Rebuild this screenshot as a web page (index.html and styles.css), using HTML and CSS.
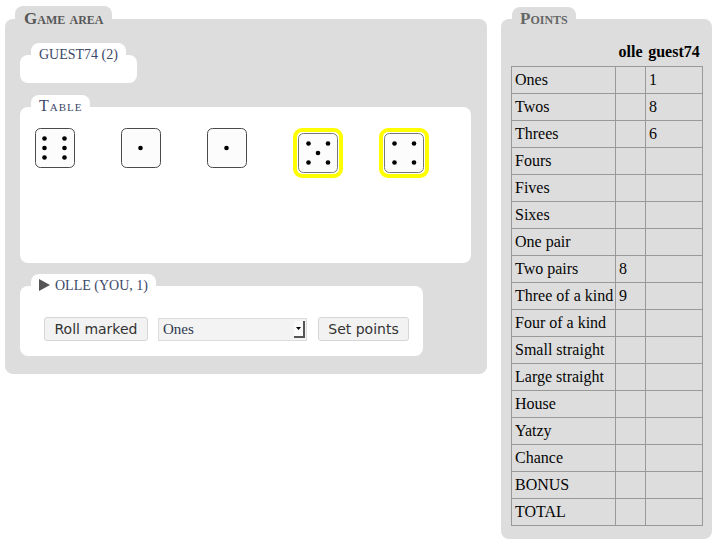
FILE: index.html
```html
<!DOCTYPE html>
<html lang="en">
<head>
<meta charset="utf-8">
<title>Yatzy</title>
<link rel="stylesheet" href="styles.css">
</head>
<body>
<div class="page">
  <section class="fs game">
    <div class="tab tab-main">Game area</div>
    <div class="panel game-body">
      <div class="fs">
        <div class="tab tab-sub">GUEST74 (2)</div>
        <div class="card guest-card"></div>
      </div>
      <div class="fs">
        <div class="tab tab-sub tab-table">Table</div>
        <div class="card table-card">
          <div class="die-slot">
            <svg class="die" viewBox="0 0 40 40" width="40" height="40"><rect x="0.5" y="0.5" width="39" height="39" rx="5" fill="#fcfcfc" stroke="#4a4a4a"/><circle cx="9.5" cy="10.5" r="2.3"/><circle cx="29.5" cy="10.5" r="2.3"/><circle cx="9.5" cy="20" r="2.3"/><circle cx="29.5" cy="20" r="2.3"/><circle cx="9.5" cy="29.5" r="2.3"/><circle cx="29.5" cy="29.5" r="2.3"/></svg>
          </div>
          <div class="die-slot">
            <svg class="die" viewBox="0 0 40 40" width="40" height="40"><rect x="0.5" y="0.5" width="39" height="39" rx="5" fill="#fcfcfc" stroke="#4a4a4a"/><circle cx="19.5" cy="20" r="2.3"/></svg>
          </div>
          <div class="die-slot">
            <svg class="die" viewBox="0 0 40 40" width="40" height="40"><rect x="0.5" y="0.5" width="39" height="39" rx="5" fill="#fcfcfc" stroke="#4a4a4a"/><circle cx="19.5" cy="20" r="2.3"/></svg>
          </div>
          <div class="die-slot">
            <div class="die-sel"><svg class="die" viewBox="0 0 40 40" width="40" height="40"><rect x="0.5" y="0.5" width="39" height="39" rx="5" fill="#fcfcfc" stroke="#777"/><circle cx="10.5" cy="10.5" r="2.3"/><circle cx="30" cy="10.5" r="2.3"/><circle cx="20" cy="20" r="2.3"/><circle cx="10.5" cy="29.5" r="2.3"/><circle cx="30" cy="29.5" r="2.3"/></svg></div>
          </div>
          <div class="die-slot">
            <div class="die-sel"><svg class="die" viewBox="0 0 40 40" width="40" height="40"><rect x="0.5" y="0.5" width="39" height="39" rx="5" fill="#fcfcfc" stroke="#777"/><circle cx="10.5" cy="10.5" r="2.3"/><circle cx="30" cy="10.5" r="2.3"/><circle cx="10.5" cy="29.5" r="2.3"/><circle cx="30" cy="29.5" r="2.3"/></svg></div>
          </div>
        </div>
      </div>
      <div class="fs player">
        <div class="tab tab-sub"><svg class="turn" viewBox="0 0 11 12" width="11" height="12"><polygon points="0,0 11,6 0,12" fill="#555"/></svg>OLLE (YOU, 1)</div>
        <div class="card player-card">
          <button class="btn roll" type="button">Roll marked</button>
          <div class="select"><span class="select-value">Ones</span><span class="select-arrow"><svg viewBox="0 0 5 3" width="5" height="3"><polygon points="0,0 5,0 2.5,3" fill="#000"/></svg></span></div>
          <button class="btn set" type="button">Set points</button>
        </div>
      </div>
    </div>
  </section>
  <section class="fs points">
    <div class="tab tab-main">Points</div>
    <div class="panel points-body">
      <table class="score">
        <colgroup><col class="c-name"><col class="c-p1"><col class="c-p2"></colgroup>
        <thead><tr><th></th><th>olle</th><th>guest74</th></tr></thead>
        <tbody>
          <tr><td>Ones</td><td></td><td>1</td></tr>
          <tr><td>Twos</td><td></td><td>8</td></tr>
          <tr><td>Threes</td><td></td><td>6</td></tr>
          <tr><td>Fours</td><td></td><td></td></tr>
          <tr><td>Fives</td><td></td><td></td></tr>
          <tr><td>Sixes</td><td></td><td></td></tr>
          <tr><td>One pair</td><td></td><td></td></tr>
          <tr><td>Two pairs</td><td>8</td><td></td></tr>
          <tr><td>Three of a kind</td><td>9</td><td></td></tr>
          <tr><td>Four of a kind</td><td></td><td></td></tr>
          <tr><td>Small straight</td><td></td><td></td></tr>
          <tr><td>Large straight</td><td></td><td></td></tr>
          <tr><td>House</td><td></td><td></td></tr>
          <tr><td>Yatzy</td><td></td><td></td></tr>
          <tr><td>Chance</td><td></td><td></td></tr>
          <tr><td>BONUS</td><td></td><td></td></tr>
          <tr><td>TOTAL</td><td></td><td></td></tr>
        </tbody>
      </table>
    </div>
  </section>
</div>
</body>
</html>
```
FILE: styles.css
```css
html, body {
  margin: 0;
  padding: 0;
  background: #fff;
}
body {
  font-family: "Liberation Serif", "Times New Roman", serif;
  color: #000;
}
.page {
  display: flex;
  align-items: flex-start;
  gap: 14px;
  padding: 6px 0 0 5px;
}
.fs {
  display: flex;
  flex-direction: column;
  align-items: flex-start;
}
.tab {
  position: relative;
  z-index: 1;
  margin-left: 10px;
  padding: 0 8px;
  height: 12px;
  border-radius: 8px 8px 0 0;
  white-space: nowrap;
}
.tab-main {
  background: #dddddd;
  height: 13px;
  padding: 0 9px;
  font-size: 17px;
  line-height: 25px;
  font-weight: bold;
  font-variant: small-caps;
  color: #585858;
}
.panel {
  background: #dddddd;
  border-radius: 8px;
  box-sizing: border-box;
}
.game-body {
  width: 482px;
  padding: 24px 16px 18px 15px;
  display: flex;
  flex-direction: column;
  gap: 12px;
}
.player {
  margin-top: -1px;
}
.tab-sub {
  background: #fff;
  margin-left: 11px;
  font-size: 14px;
  line-height: 24px;
  color: #3c4868;
}
.tab-table {
  font-size: 16px;
  font-variant: small-caps;
  letter-spacing: 1px;
  line-height: 22px;
  padding-right: 7px;
}
.card {
  background: #fff;
  border-radius: 8px;
  box-sizing: border-box;
}
.guest-card {
  width: 117px;
  height: 28px;
}
.table-card {
  width: 451px;
  height: 156px;
  padding: 21px 0 0 15px;
  display: flex;
  align-items: flex-start;
}
.die-slot {
  width: 86px;
  flex: none;
  line-height: 0;
}
.die {
  display: block;
}
.die-sel {
  display: inline-block;
  border: 4px solid #ffff00;
  border-radius: 9px;
  padding: 1px;
}
.turn {
  vertical-align: -1px;
  margin-right: 5px;
}
.player-card {
  width: 403px;
  height: 70px;
  padding: 31px 14px 15px 24px;
  display: flex;
  align-items: center;
}
.btn {
  height: 24px;
  padding: 0 9px;
  font-family: "DejaVu Sans", Verdana, sans-serif;
  font-size: 14px;
  color: #333;
  background: #f2f2f2;
  border: 1px solid #d6d6d6;
  border-radius: 3px;
  margin: 0;
}
.roll {
  width: 104px;
}
.set {
  width: 91px;
  margin-left: 11px;
}
.select {
  margin-left: 10px;
  width: 149px;
  height: 23px;
  box-sizing: border-box;
  border: 1px solid #dcdcdc;
  background: #f3f3f3;
  display: flex;
  align-items: center;
  justify-content: space-between;
  padding: 0 1px 0 4px;
}
.select-value {
  font-size: 15px;
  color: #2f3850;
}
.select-arrow {
  width: 11px;
  height: 17px;
  box-sizing: border-box;
  background: #fbfbfb;
  border-right: 2px solid #555;
  border-bottom: 2px solid #555;
  display: flex;
  align-items: center;
  justify-content: center;
}
.select-arrow svg {
  display: block;
}
.points {
  margin-top: 1px;
}
.points .tab-main {
  margin-left: 11px;
  height: 12px;
  padding: 0 8px;
  line-height: 24px;
  color: #666;
}
.points-body {
  width: 211px;
  padding: 24px 10px 13px 10px;
}
.score {
  width: 191px;
  border-collapse: collapse;
  table-layout: fixed;
  font-size: 16px;
}
.c-name { width: 104px; }
.c-p1 { width: 30px; }
.c-p2 { width: 57px; }
.score th {
  font-weight: bold;
  padding: 0 0 5px;
  line-height: 18px;
  text-align: center;
  white-space: nowrap;
}
.score td {
  border: 1px solid #999;
  padding: 0 3px;
  line-height: 26px;
  white-space: nowrap;
  color: #050505;
}
```
